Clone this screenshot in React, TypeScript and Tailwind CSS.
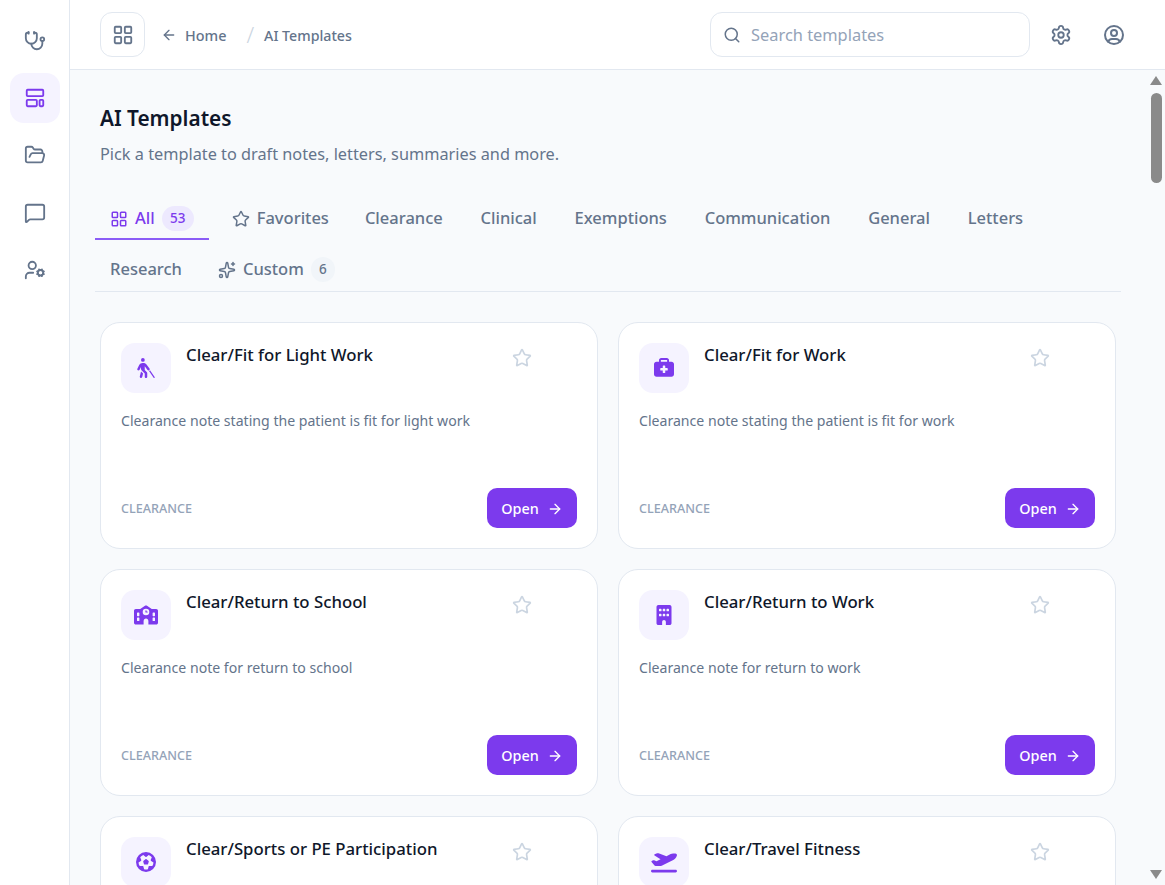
import type { ReactNode } from "react"
import {
  Stethoscope,
  FolderOpen,
  MessageSquare,
  UserCog,
  LayoutGrid,
  ArrowLeft,
  ArrowRight,
  Search,
  Settings,
  Star,
  Sparkles,
} from "lucide-react"
import { TbUserCircle } from "react-icons/tb"
import { FaSchool, FaBuilding, FaBriefcaseMedical, FaFutbol, FaPlaneDeparture, FaPersonWalkingWithCane } from "react-icons/fa6"

const tabs = ["Clearance", "Clinical", "Exemptions", "Communication", "General", "Letters"]

const cards: { title: string; desc: string; icon: ReactNode }[] = [
  { title: "Clear/Fit for Light Work", desc: "Clearance note stating the patient is fit for light work", icon: <FaPersonWalkingWithCane className="h-5 w-5" /> },
  { title: "Clear/Fit for Work", desc: "Clearance note stating the patient is fit for work", icon: <FaBriefcaseMedical className="h-5 w-5" /> },
  { title: "Clear/Return to School", desc: "Clearance note for return to school", icon: <FaSchool className="h-6 w-6" /> },
  { title: "Clear/Return to Work", desc: "Clearance note for return to work", icon: <FaBuilding className="h-5 w-5" /> },
  { title: "Clear/Sports or PE Participation", desc: "Clearance note for sports or PE participation", icon: <FaFutbol className="h-5 w-5" /> },
  { title: "Clear/Travel Fitness", desc: "Clearance note stating fitness for travel", icon: <FaPlaneDeparture className="h-[26px] w-[26px]" /> },
]

function TemplateIcon() {
  return (
    <svg viewBox="0 0 24 24" fill="none" stroke="currentColor" strokeWidth="2" strokeLinejoin="round" className="h-[22px] w-[22px]">
      <rect x="3" y="3" width="18" height="7" rx="1" />
      <rect x="3" y="14" width="11" height="7" rx="1" />
      <rect x="17" y="14" width="4" height="7" rx="1" />
    </svg>
  )
}

function Card({ title, desc, icon }: { title: string; desc: string; icon: ReactNode }) {
  return (
    <div className="flex h-[227px] flex-col rounded-[20px] border border-[#e2e8f0] bg-white p-5">
      <div className="flex items-start">
        <div className="flex h-[50px] w-[50px] shrink-0 items-center justify-center rounded-[14px] bg-[#f5f3ff] text-[#7c3aed]">
          {icon}
        </div>
        <div className="ml-[15px] flex-1 text-[16.75px] leading-6 font-medium text-[#0f172a]">{title}</div>
        <Star className="mt-[5px] mr-[45px] h-5 w-5 shrink-0 text-[#cbd5e1]" />
      </div>
      <p className="mt-[17px] text-[14.1px] leading-[22px] text-[#64748b]">{desc}</p>
      <div className="mt-auto flex items-center justify-between">
        <span className="pt-[2px] text-[12.6px] font-medium text-[#94a3b8]">CLEARANCE</span>
        <button className="flex h-10 w-[90px] items-center justify-center gap-2 rounded-[10px] bg-[#7c3aed] pt-px text-[14.4px] font-medium text-white">
          Open
          <ArrowRight className="h-4 w-4" />
        </button>
      </div>
    </div>
  )
}

export default function App() {
  return (
    <div className="flex h-[885px] overflow-hidden bg-white font-['Noto_Sans',sans-serif]">
      <aside className="flex w-[70px] shrink-0 flex-col items-center gap-[7.5px] border-r border-[#e2e8f0] pt-[15px] text-[#64748b]">
        <div className="flex h-[50px] w-[50px] items-center justify-center pt-px">
          <Stethoscope className="h-[22px] w-[22px]" />
        </div>
        <div className="flex h-[50px] w-[50px] items-center justify-center rounded-[14px] bg-[#f5f3ff] text-[#7c3aed]">
          <TemplateIcon />
        </div>
        <div className="flex h-[50px] w-[50px] items-center justify-center">
          <FolderOpen className="h-[22px] w-[22px]" />
        </div>
        <div className="flex h-[50px] w-[50px] items-center justify-center">
          <MessageSquare className="h-[22px] w-[22px]" />
        </div>
        <div className="flex h-[50px] w-[50px] items-center justify-center">
          <UserCog className="h-[22px] w-[22px]" />
        </div>
      </aside>

      <div className="flex min-w-0 flex-1 flex-col">
        <header className="flex h-[70px] shrink-0 items-center border-b border-[#e2e8f0] pr-[39px] pl-[30px]">
          <div className="flex h-[45px] w-[45px] items-center justify-center rounded-xl border border-[#e2e8f0] text-[#64748b]">
            <LayoutGrid className="h-[22px] w-[22px]" />
          </div>
          <ArrowLeft className="ml-4 h-4 w-4 text-[#64748b]" />
          <span className="ml-[8px] pt-[3px] text-[14.4px] font-medium text-[#64748b]">Home</span>
          <span className="ml-[20px] text-[22px] font-light text-[#cbd5e1]">/</span>
          <span className="ml-[10px] pt-[3px] text-[14.2px] font-medium text-[#64748b]">AI Templates</span>
          <div className="ml-auto flex h-[45px] w-[320px] items-center gap-[10px] rounded-xl border border-[#e2e8f0] px-3 text-[#94a3b8]">
            <Search className="h-[18px] w-[18px] text-[#64748b]" />
            <span className="pt-[2px] text-[16.4px]">Search templates</span>
          </div>
          <Settings className="ml-[20px] h-[22px] w-[22px] text-[#64748b]" />
          <TbUserCircle className="ml-[30px] h-6 w-6 text-[#64748b]" />
        </header>

        <div className="flex min-h-0 flex-1 bg-[#f8fafc]">
          <main className="min-w-0 flex-1 overflow-hidden pt-[33px] pr-[31px] pl-[30px]">
            <h1 className="text-[20.8px] leading-[30px] font-semibold text-[#0f172a]">AI Templates</h1>
            <p className="mt-[9px] text-[16.3px] leading-6 text-[#64748b]">
              Pick a template to draft notes, letters, summaries and more.
            </p>

            <div className="mx-[-5px] mt-[28px] flex flex-wrap gap-y-[5px] border-b border-[#e2e8f0] text-[16.5px] text-[#64748b]">
              <div className="flex h-[46px] items-center gap-[7px] border-b-2 border-[#8b5cf6] px-[15px] pt-[5px] font-medium text-[#7c3aed]">
                <LayoutGrid className="h-[18px] w-[18px]" />
                <span>All</span>
                <span className="flex h-[25px] w-8 items-center justify-center rounded-full bg-[#ede9fe] text-[13.5px]">53</span>
              </div>
              <div className="flex h-[46px] items-center gap-[7px] border-b-2 border-transparent pt-[5px] pr-[22px] pl-[23px] font-medium">
                <Star className="h-[18px] w-[18px]" />
                Favorites
              </div>
              {tabs.map((t, i) => (
                <div key={t} className={`flex h-[46px] items-center border-b-2 border-transparent pt-[5px] font-medium ${i === 0 ? "pr-[18.9px] pl-[14px]" : "px-[18.9px]"}`}>
                  {t}
                </div>
              ))}
              <div className="flex h-[46px] items-center border-b-2 border-transparent pt-[5px] pr-[18px] pl-[15px] font-medium">Research</div>
              <div className="flex h-[46px] items-center gap-[7px] border-b-2 border-transparent px-[18px] pt-[5px] font-medium">
                <Sparkles className="h-[18px] w-[18px]" />
                Custom
                <span className="flex h-[25px] w-6 items-center justify-center rounded-full bg-[#f1f5f9] text-[13.5px]">6</span>
              </div>
            </div>

            <div className="mt-[30px] grid grid-cols-2 gap-5">
              {cards.map((c) => (
                <Card key={c.title} {...c} />
              ))}
            </div>
          </main>

          <div className="flex w-[18px] shrink-0 flex-col items-center bg-[#f8fafc] pt-[6px]">
            <div className="h-0 w-0 border-x-[6.5px] border-b-[9px] border-x-transparent border-b-[#8a8a8a]" />
            <div className="mt-[8px] h-[90px] w-[11px] rounded-full bg-[#8a8a8a]" />
            <div className="mt-auto mb-[6px] h-0 w-0 border-x-[6.5px] border-t-[9px] border-x-transparent border-t-[#8a8a8a]" />
          </div>
        </div>
      </div>
    </div>
  )
}
